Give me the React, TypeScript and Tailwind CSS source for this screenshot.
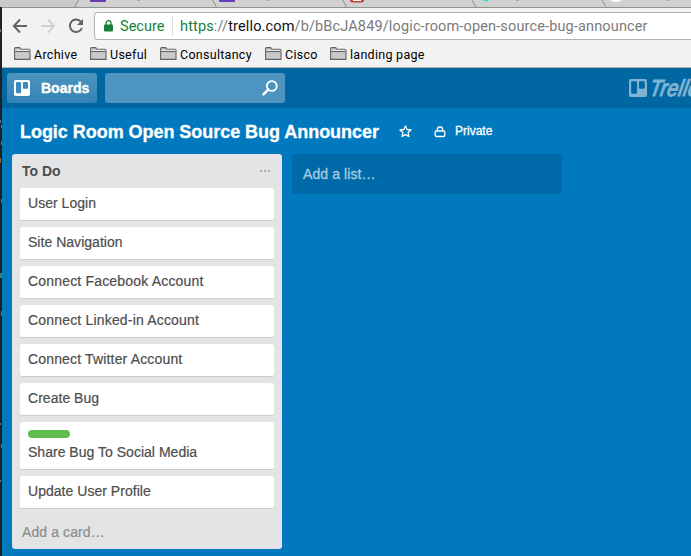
import React from "react";

const bookmarks = [
  { label: "Archive", width: "w-[76px]" },
  { label: "Useful", width: "w-[70px]" },
  { label: "Consultancy", width: "w-[105px]" },
  { label: "Cisco", width: "w-[65px]" },
  { label: "landing page", width: "w-[110px]" },
];

const cards = [
  { title: "User Login", tracking: "tracking-[0.03px]" },
  { title: "Site Navigation", tracking: "tracking-[0.03px]" },
  { title: "Connect Facebook Account", tracking: "tracking-[0.18px]" },
  { title: "Connect Linked-in Account", tracking: "tracking-[0.18px]" },
  { title: "Connect Twitter Account", tracking: "tracking-[0.16px]" },
  { title: "Create Bug", tracking: "tracking-[0.03px]" },
  { title: "Share Bug To Social Media", tracking: "tracking-[0.02px]", label: true },
  { title: "Update User Profile", tracking: "tracking-[0.03px]" },
];

function Folder() {
  return (
    <svg width="17" height="14" viewBox="0 0 17 14" className="shrink-0">
      <path d="M.6 12.4V1.6q0-1 1-1h3.6q.8 0 1.200.8l.5.9h8.100q1 0 1 1v9.100z" fill="#c9c9c9" stroke="#626262" strokeWidth="1.100" />
      <path d="M1.200 4.500h14.200" stroke="#626262" strokeWidth="1.100" />
      <path d="M1.200 3.400h14.200" stroke="#ededed" strokeWidth="1" />
    </svg>
  );
}

function TrelloMark({ size, hole }: { size: number; hole: string }) {
  return (
    <svg width={size} height={size} viewBox="0 0 18 18" className="shrink-0">
      <rect width="18" height="18" rx="2" fill="currentColor" />
      <rect x="2.2" y="2.2" width="5.8" height="12.6" rx="1.2" fill={hole} />
      <rect x="10" y="2.2" width="5.8" height="7.6" rx="1.2" fill={hole} />
    </svg>
  );
}

function Tabs() {
  return (
    <svg width="689" height="8" viewBox="2 0 689 8" className="block shrink-0">
      <rect x="2" width="689" height="7" fill="#d1d1d1" />
      <path d="M2 0h76l-3 7H2z" fill="#cacaca" />
      <path d="M78.5 0 75 7M212.500 0l4 7M342.500 0l4 7M472 0l4 7M602 0l4 7" stroke="#8d8d8d" fill="none" />
      <path d="M90 0h16v1q0 1-1 1H91q-1 0-1-1zM219 0h16v1q0 1-1 1h-14q-1 0-1-1z" fill="#673ab7" />
      <path d="M350 0h14v1q-1 1.500-3 1.500h-8q-2 0-3-1.500z" fill="#c8452f" />
      <path d="M353 0h8v1h-8z" fill="#fff" />
      <path d="M483 0h6q-1 1.500-3 1.500T483 0z" fill="#35e0d5" />
      <path d="M610 0h12q-2 2-6 2t-6-2z" fill="#fff" />
      <path d="M137 0h3v1h-3zM267 0h3v1h-3zM516 0h3v1h-3zM666 0h3v1h-3z" fill="#aaa" />
      <rect x="2" y="7" width="689" height="1" fill="#929292" />
    </svg>
  );
}

function BrowserBar() {
  return (
    <div className="flex h-[60px] shrink-0 flex-col border-b border-[#b4b4b4] bg-[#f2f2f2] font-[Roboto,sans-serif]">
      <div className="flex h-[36px] shrink-0 items-center">
        <svg width="90" height="28" viewBox="2 12 90 28" fill="none" className="shrink-0">
          <path d="M27 26H14M20 19.500 13.800 26l6.200 6.500" stroke="#626262" strokeWidth="1.900" />
          <path d="M41 26h13M48 19.500l6.200 6.500-6.200 6.500" stroke="#d1d1d1" strokeWidth="1.900" />
          <path d="M81 22a6.200 6.200 0 1 0 .9 6" stroke="#626262" strokeWidth="2" />
          <path d="M83 19v6h-6z" fill="#626262" />
        </svg>
        <div className="ml-[2px] flex h-7 flex-1 items-center rounded-l border border-r-0 border-[#b3b3b3] bg-white">
          <svg width="9" height="12" viewBox="0 0 9 12" className="ml-[9px] shrink-0">
            <rect y="4.500" width="9" height="7" rx="1" fill="#188038" />
            <path d="M2 5V3.200a2.500 2.500 0 0 1 5 0V5" stroke="#188038" strokeWidth="1.300" fill="none" />
          </svg>
          <span className="ml-[7px] w-[52px] whitespace-nowrap pt-[2px] text-[14.5px] tracking-[0.02px] text-[#188038]">Secure</span>
          <span className="h-5 w-px bg-[#dedede]" />
          <span className="ml-[7px] whitespace-nowrap pt-[2px] text-[14.5px] tracking-[0.143px] text-[#7b7b7b]">
            <span className="text-[#188038]">https</span>://<span className="text-[#111]">trello.com</span>/b/bBcJA849/logic-room-open-source-bug-announcer
          </span>
        </div>
      </div>
      <div className="flex flex-1 items-center pb-[4px] pl-3">
        {bookmarks.map((b) => (
          <div key={b.label} className={`flex shrink-0 items-center gap-[3px] ${b.width}`}>
            <Folder />
            <span className="whitespace-nowrap pt-[2px] text-[12.5px] tracking-[0.28px] text-black">{b.label}</span>
          </div>
        ))}
      </div>
    </div>
  );
}

function Header() {
  return (
    <header className="flex h-[41px] shrink-0 items-start overflow-hidden border-b border-[#0071b4] bg-[#0067a3] pl-[5px] pt-[5px] text-white">
      <button className="flex h-[30px] w-[90px] shrink-0 items-center rounded-[3px] bg-linear-to-b from-[#4d94c0] to-[#3283b6] pl-[7px]">
        <TrelloMark size={16} hole="#3d8bba" />
        <span className="ml-[11px] text-[14px] font-bold [-webkit-text-stroke:0.4px]">Boards</span>
      </button>
      <div className="ml-2 flex h-[30px] w-[180px] shrink-0 items-center justify-end rounded-[3px] bg-[#4d94c0] pr-[6px]">
        <svg width="18" height="18" viewBox="0 0 18 18" fill="none" stroke="currentColor">
          <circle cx="10.800" cy="7" r="4.900" strokeWidth="1.900" />
          <path d="M7.200 10.700 2.500 15.400" strokeWidth="2.600" strokeLinecap="round" />
        </svg>
      </div>
      <div className="ml-[344px] flex h-[30px] shrink-0 items-center text-[#7fb3d1]">
        <TrelloMark size={18} hole="#0067a3" />
        <span className="ml-[3px] inline-block origin-left -skew-x-12 scale-x-[0.86] whitespace-nowrap text-[23px] italic leading-none tracking-[0.3px] [-webkit-text-stroke:1.2px] [stroke-linejoin:round]">Trello</span>
      </div>
    </header>
  );
}

function TodoList() {
  return (
    <section className="flex h-[395px] w-[270px] shrink-0 flex-col rounded-[3px] bg-[#e2e4e6] px-2">
      <div className="flex h-[34px] shrink-0 items-center justify-between pl-[2px] pr-1">
        <h2 className="text-[14px] font-bold text-[#4d4d4d]">To Do</h2>
        <span className="flex gap-[2px] pb-px">
          <i className="size-[2px] rounded-full bg-[#999]" />
          <i className="size-[2px] rounded-full bg-[#999]" />
          <i className="size-[2px] rounded-full bg-[#999]" />
        </span>
      </div>
      <div className="flex flex-col gap-[6px]">
        {cards.map((c) => (
          <article key={c.title} className="w-[254px] rounded-[3px] border-b border-[#cccccc] bg-white px-2 pb-[8px] pt-[6px] text-[14px] leading-[18px] text-[#4d4d4d]">
            {c.label && <div className="mb-[5px] mt-[2px] h-2 w-[42px] rounded bg-[#61bd4f]" />}
            <p className={`whitespace-nowrap [-webkit-text-stroke:0.2px] ${c.tracking}`}>{c.title}</p>
          </article>
        ))}
      </div>
      <a className="ml-[2px] mt-[14px] text-[14px] leading-[18px] tracking-[0.1px] text-[#8c8c8c] [-webkit-text-stroke:0.2px]">Add a card…</a>
    </section>
  );
}

export default function App() {
  return (
    <div className="flex h-[556px] w-[691px] overflow-hidden bg-[#202124] font-['Liberation_Sans',Arial,sans-serif]">
      <svg width="2" height="556" className="shrink-0">
        <rect width="2" height="7" fill="#c8c8c8" />
        <path d="M0 29h1v3H0zM0 120h1v3H0zM1 125h1v3H1zM1 141h1v4H1zM1 199h1v4H1zM1 311h1v5H1zM0 423h1v2H0zM1 444h1v4H1zM0 480h1v2H0z" fill="#6b717c" />
        <path d="M0 273h2v5H0z" fill="#3e7d70" />
        <path d="M0 158h1v5H0z" fill="#8c6545" />
      </svg>
      <div className="flex w-[689px] flex-col bg-[#0079bf]">
        <Tabs />
        <BrowserBar />
        <Header />
        <main className="flex flex-1 flex-col">
          <div className="flex h-[45px] shrink-0 items-center pl-[18px] text-white">
            <h1 className="w-[379px] whitespace-nowrap pt-px text-[18px] font-bold tracking-[-0.04px] [-webkit-text-stroke:0.3px]">Logic Room Open Source Bug Announcer</h1>
            <svg width="13" height="13" viewBox="0 0 13 13" className="shrink-0" fill="none" stroke="currentColor" strokeWidth="1.300" strokeLinejoin="round">
              <path d="m6.500 1 1.600 3.500 3.900.5-2.900 2.600.8 3.900-3.400-1.900-3.400 1.900.8-3.900L1 5l3.900-.5z" />
            </svg>
            <svg width="12" height="12" viewBox="0 0 12 12" className="ml-[22px] shrink-0" fill="none" stroke="currentColor" strokeWidth="1.300">
              <rect x="1.200" y="5" width="9.600" height="5.500" rx="1.200" />
              <path d="M3.300 5V3.700a2.700 2.700 0 0 1 5.400 0V5" />
            </svg>
            <span className="ml-[9px] pb-px text-[12px] [-webkit-text-stroke:0.3px]">Private</span>
          </div>
          <div className="flex items-start gap-[10px] pl-[10px]">
            <TodoList />
            <div className="flex h-10 w-[270px] items-center rounded-[3px] bg-[#006aa8] pl-[11px] text-[14px] tracking-[0.1px] text-[#a6cbe2] [-webkit-text-stroke:0.3px]">Add a list…</div>
          </div>
        </main>
      </div>
    </div>
  );
}
